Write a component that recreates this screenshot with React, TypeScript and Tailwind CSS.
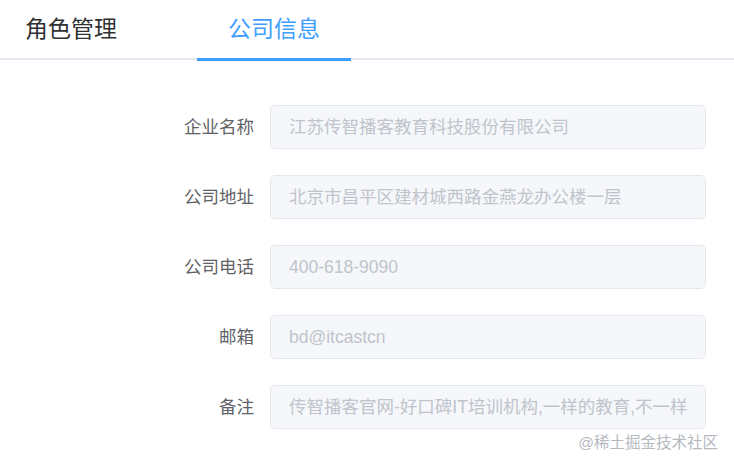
import React from 'react';

const fields = [
  { label: '企业名称', value: '江苏传智播客教育科技股份有限公司' },
  { label: '公司地址', value: '北京市昌平区建材城西路金燕龙办公楼一层' },
  { label: '公司电话', value: '400-618-9090' },
  { label: '邮箱', value: 'bd@itcastcn' },
  { label: '备注', value: '传智播客官网-好口碑IT培训机构,一样的教育,不一样' },
];

export default function App() {
  return (
    <div
      className="relative w-[734px] h-[469px] bg-white overflow-hidden"
      style={{ fontFamily: '"Liberation Sans", "Noto Sans CJK SC", sans-serif' }}
    >
      {/* tabs */}
      <div className="flex h-[60px] border-b-2 border-[#e4e7ed]">
        <div className="flex items-center pl-[25px] pr-[80px] text-[23px] text-[#303133]">角色管理</div>
        <div className="relative flex items-center px-[31px] text-[23px] text-[#409eff]">
          公司信息
          <span className="absolute left-0 right-0 bottom-[-3px] h-[3px] bg-[#409eff]" />
        </div>
      </div>

      {/* form */}
      <div className="flex flex-col gap-[26px] pt-[45px]">
        {fields.map((f) => (
          <div key={f.label} className="flex items-center">
            <div className="w-[254px] text-right text-[17.5px] text-[#606266]">{f.label}</div>
            <div className="ml-[16px] flex h-[44px] w-[436px] items-center overflow-hidden whitespace-nowrap rounded-[5px] border border-[#e4e7ed] bg-[#f5f7fa] pl-[18px] text-[17.5px] text-[#c0c4cc]">
              {f.value}
            </div>
          </div>
        ))}
      </div>

      <div className="absolute right-[16px] bottom-[15px] text-[15.5px] text-[#b5b9bf]">@稀土掘金技术社区</div>
    </div>
  );
}
